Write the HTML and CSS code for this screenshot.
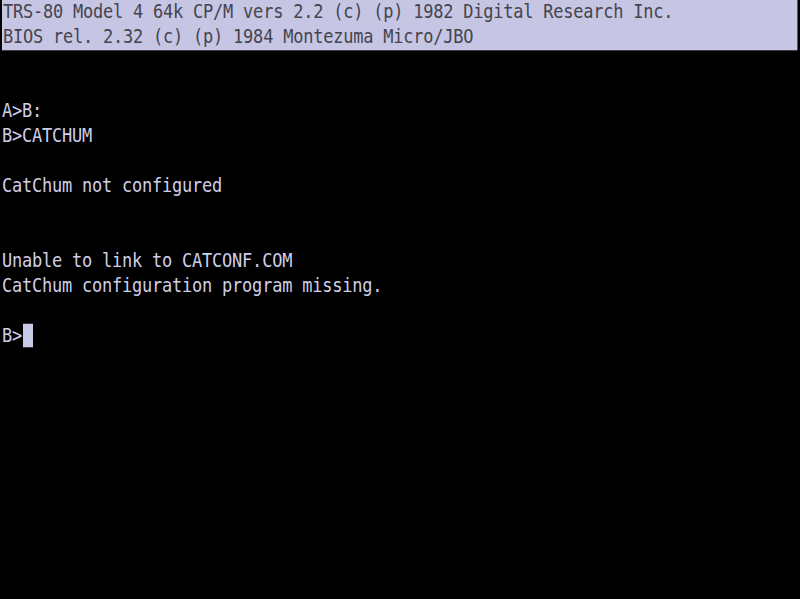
FILE: index.html
```html
<!DOCTYPE html>
<html>
<head>
<meta charset="utf-8">
<link rel="stylesheet" href="styles.css">
</head>
<body>
<div class="screen">
  <div class="banner">
    <div class="line">TRS-80 Model 4 64k CP/M vers 2.2 (c) (p) 1982 Digital Research Inc.</div>
    <div class="line">BIOS rel. 2.32 (c) (p) 1984 Montezuma Micro/JBO</div>
  </div>
  <div class="console">
    <div class="line">&nbsp;</div>
    <div class="line">&nbsp;</div>
    <div class="line">A&gt;B:</div>
    <div class="line">B&gt;CATCHUM</div>
    <div class="line">&nbsp;</div>
    <div class="line">CatChum not configured</div>
    <div class="line">&nbsp;</div>
    <div class="line">&nbsp;</div>
    <div class="line">Unable to link to CATCONF.COM</div>
    <div class="line">CatChum configuration program missing.</div>
    <div class="line">&nbsp;</div>
    <div class="line">B&gt;<span class="cursor"></span></div>
  </div>
</div>
</body>
</html>
```
FILE: styles.css
```css
html, body {
  margin: 0;
  padding: 0;
  background: #000;
  width: 800px;
  height: 599px;
  overflow: hidden;
}
.screen {
  font-family: "DejaVu Sans Mono", "Liberation Mono", monospace;
  font-size: 17px;
  letter-spacing: -0.23px;
  color: #cfcfe8;
}
.banner {
  margin-left: 2px;
  width: 795px;
  height: 50px;
  background: #c6c6e4;
  color: #44444e;
  box-shadow: 0 1px 0 #3a3a48, 1px 0 0 #5a5a68;
}
.line {
  height: 25px;
  line-height: 25px;
  padding-left: 2px;
  white-space: pre;
  transform: translateY(-2px) scaleY(1.12);
}
.banner .line {
  padding-left: 1px;
  transform: translateY(-1px) scaleY(1.12);
}
.console .line {
  display: flex;
  align-items: center;
}
.cursor {
  display: inline-block;
  width: 10px;
  height: 21px;
  margin-left: 0.5px;
  background: #c8c8e8;
}
```
